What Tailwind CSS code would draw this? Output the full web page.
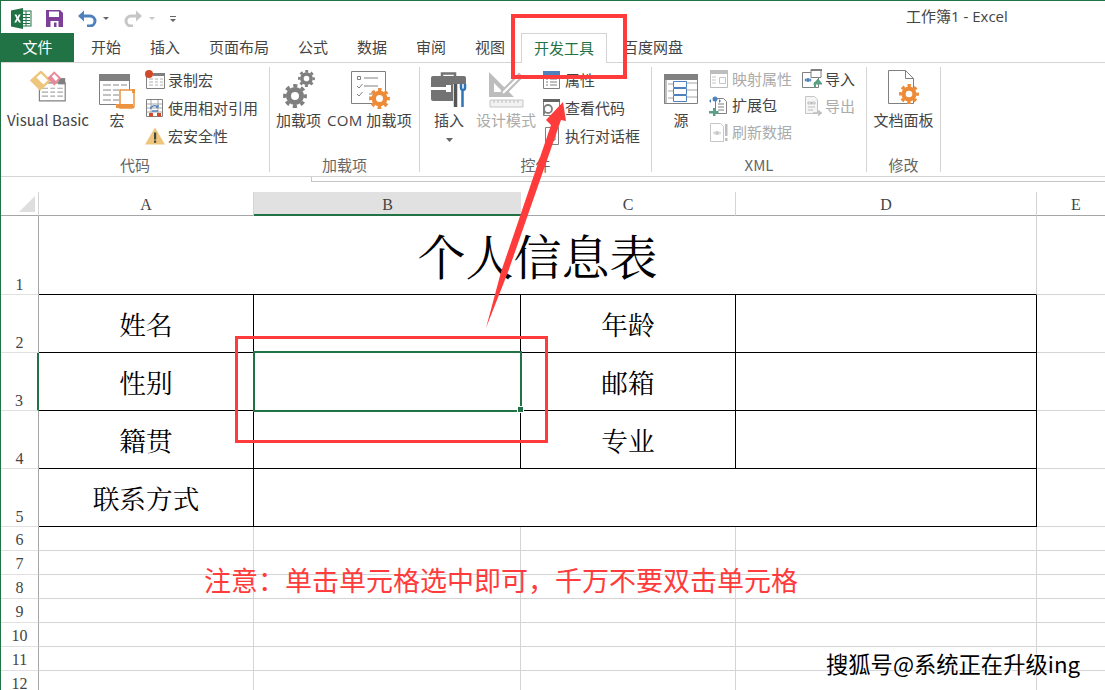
<!DOCTYPE html>
<html lang="zh-CN">
<head>
    <meta charset="UTF-8">
    <title>工作簿1 - Excel</title>
    <script src="https://cdn.jsdelivr.net/npm/@tailwindcss/browser@4"></script>
</head>
<body class="relative w-[1105px] h-[690px] overflow-hidden bg-white font-['Noto_Sans_CJK_SC',sans-serif] text-[15px] text-[#444]">

    <!-- 共用图形 -->
    <svg class="absolute w-0 h-0">
        <symbol id="gear" viewBox="0 0 24 24">
            <circle cx="12" cy="12" r="6.5" fill="none" stroke="currentColor" stroke-width="5"/>
            <circle cx="12" cy="12" r="10.2" fill="none" stroke="currentColor" stroke-width="3.4" stroke-dasharray="4.2 3.81" stroke-dashoffset="2.1"/>
        </symbol>
    </svg>

    <div class="h-[690px] border-l border-t border-[#217346] flex flex-col">
        <!-- 标题栏 -->
        <div class="relative h-[32px] shrink-0 flex items-center">
            <svg class="ml-[10px] mt-[2px]" width="21" height="21" viewBox="0 0 21 21">
                <rect x="9" y="3" width="11" height="15" fill="#fff" stroke="#217346"/>
                <path d="M11 6.500h8M11 9.500h8M11 12.500h8M11 15.500h8M15 3v15" stroke="#217346" stroke-width="1"/>
                <path d="M0 2.500 12 0v21L0 18.500z" fill="#217346"/>
                <path d="M3.500 6.500h2l1 2.500 1.200-2.500h2L7.700 10.500l2.300 4h-2L6.500 12l-1.300 2.500h-2L5.500 10.500z" fill="#fff"/>
            </svg>
            <svg class="ml-[14px] mt-[2px]" width="17" height="17" viewBox="0 0 17 17">
                <path d="M0 0h14l3 3v14H0z" fill="#7d3f98"/>
                <path d="M3 1.500h10v5.500H3z" fill="#fff"/>
                <path d="M4.500 11h8v6h-8z" fill="#fff"/>
                <path d="M8 12.500h2.500V17H8z" fill="#7d3f98"/>
            </svg>
            <svg class="ml-[15px] mt-[2px]" width="20" height="17" viewBox="0 0 20 17">
                <path d="M4 6h8a5 5 0 0 1 0 10H9" fill="none" stroke="#4f82bd" stroke-width="3"/>
                <path d="M0 6 6 .500V11.500z" fill="#4f82bd"/>
            </svg>
            <svg class="ml-[5px] mt-[3px]" width="6" height="3" viewBox="0 0 6 3"><path d="M0 0h6L3 3z" fill="#666"/></svg>
            <svg class="ml-[15px] mt-[2px]" width="18" height="17" viewBox="0 0 18 17">
                <path d="M14 6H7a5 5 0 0 0 0 10h2" fill="none" stroke="#c6c6c6" stroke-width="3"/>
                <path d="M18 6l-6-5.500V11.500z" fill="#c6c6c6"/>
            </svg>
            <svg class="ml-[7px] mt-[3px]" width="6" height="3" viewBox="0 0 6 3"><path d="M0 0h6L3 3z" fill="#c6c6c6"/></svg>
            <svg class="ml-[15px] mt-[3px]" width="6" height="6" viewBox="0 0 6 6"><path d="M0 0h6v1H0zM0 3h6L3 6z" fill="#666"/></svg>
            <span class="absolute left-[905px] top-[4px] leading-[22px] whitespace-nowrap">工作簿<span class="font-['Open_Sans',sans-serif]">1 - Excel</span></span>
        </div>

        <!-- 选项卡 -->
        <div class="h-[30px] shrink-0 flex border-b border-[#d4d4d4] leading-[28px]">
            <div class="w-[73px] bg-[#217346] text-white text-center">文件</div>
            <div class="ml-[2.500px] px-[14.500px]">开始</div>
            <div class="px-[14.500px]">插入</div>
            <div class="px-[14.500px]">页面布局</div>
            <div class="px-[14.500px]">公式</div>
            <div class="px-[14.500px]">数据</div>
            <div class="px-[14.500px]">审阅</div>
            <div class="px-[14.500px]">视图</div>
            <div class="mx-[1.500px] w-[86px] h-[30px] text-center border border-b-0 border-[#d4d4d4] bg-white text-[#217346]">开发工具</div>
            <div class="px-[14.500px]">百度网盘</div>
        </div>

        <!-- 功能区 -->
        <div class="h-[114px] shrink-0 flex border-b border-[#d4d4d4]">
            <!-- 代码 -->
            <section class="w-[268px] flex flex-col">
                <div class="h-[92px] flex">
                    <div class="ml-[6px] w-[82px] flex flex-col items-center">
                        <svg class="mt-[8px]" width="36" height="33" viewBox="0 0 46 42">
                            <path d="M12 15h33v23H12z" fill="#fff" stroke="#808080" stroke-width="1.500"/>
                            <path d="M36 9h9v8h-9z" fill="#808080"/>
                            <path d="M15 22h8M26 22h6M35 22h7M15 27h8M26 27h6M35 27h7M15 32h8M26 32h6M35 32h7" stroke="#a6a6a6" stroke-width="1.500"/>
                            <path d="M14 1 25 12 13 23 2 12z" fill="#fff" stroke="#edc67c" stroke-width="3"/>
                            <path d="M2 12l11 11 5-5-11-11z" fill="#edc67c"/>
                            <path d="M31 2 38 9 31 17 24 9z" fill="#fff" stroke="#e88a9a" stroke-width="2.500"/>
                            <path d="M24 9l7 8 3-3-7-8z" fill="#e88a9a"/>
                        </svg>
                        <span class="mt-[5px] leading-[22px] whitespace-nowrap">Visual Basic</span>
                    </div>
                    <div class="ml-[10px] w-[36px] flex flex-col items-center">
                        <svg class="mt-[11px]" width="36" height="38" viewBox="0 0 36 38">
                            <path d="M.500 .500h30v30H.500z" fill="#fff" stroke="#808080"/>
                            <path d="M0 0h31v7H0z" fill="#808080"/>
                            <path d="M4 11h8M14 11h6M22 11h6M4 16h8M14 16h6M4 21h8M14 21h6M4 26h8M14 26h6" stroke="#b0b0b0" stroke-width="1.500"/>
                            <path d="M21 16h14v16a2 2 0 0 1-2 2H21z" fill="#fff" stroke="#ed933f" stroke-width="1.500"/>
                            <path d="M17 30h17v4H17z" fill="#ed933f"/>
                            <path d="M33 15h3v4h-3z" fill="#ed933f"/>
                        </svg>
                        <span class="-mt-[3px] leading-[22px]">宏</span>
                    </div>
                    <div class="ml-[10px] pt-[3px] flex flex-col">
                        <div class="h-[28px] flex items-center gap-[3px]">
                            <svg width="20" height="20" viewBox="0 0 20 20">
                                <path d="M1.500 3.500h18v15h-18z" fill="#fff" stroke="#808080"/>
                                <path d="M8 3h12v3H8z" fill="#808080"/>
                                <path d="M4 9h4M10 9h3M15 9h3M4 12h4M10 12h3M15 12h3M4 15h4M10 15h3M15 15h3" stroke="#b0b0b0"/>
                                <circle cx="4" cy="4" r="4" fill="#d2492a"/>
                            </svg>
                            <span>录制宏</span>
                        </div>
                        <div class="h-[28px] flex items-center gap-[3px]">
                            <svg width="20" height="20" viewBox="0 0 20 20">
                                <path d="M1.500 1.500h16v17h-16z" fill="#fff" stroke="#808080"/>
                                <path d="M6 2v16M13 2v16M2 6h15M2 10h15M2 14h15" stroke="#a6a6a6"/>
                                <path d="M4 15h4v3.500H4zM12 15h4v3.500h-4z" fill="#d2492a"/>
                                <path d="M5.500 11a4 3.500 0 0 1 7.500-1.500M13 9.500l-2-.5M13 9.500v-2.500M7 13h6" fill="none" stroke="#4f82bd" stroke-width="1.300"/>
                            </svg>
                            <span>使用相对引用</span>
                        </div>
                        <div class="h-[28px] flex items-center gap-[3px]">
                            <svg width="20" height="18" viewBox="0 0 20 18">
                                <path d="M10 .500 20 17.500H0z" fill="#edc67c"/>
                                <path d="M9 5.500h2.200v7H9zM9 13.500h2.200v2.300H9z" fill="#444"/>
                            </svg>
                            <span>宏安全性</span>
                        </div>
                    </div>
                </div>
                <div class="leading-[20px] text-center text-[#666]">代码</div>
            </section>
            <div class="w-px my-[4px] h-[105px] bg-[#d4d4d4]"></div>

            <!-- 加载项 -->
            <section class="w-[149px] flex flex-col">
                <div class="h-[92px] flex">
                    <div class="ml-[6px] w-[45px] flex flex-col items-center">
                        <svg class="mt-[7px] ml-[1px] text-[#7f7f7f]" width="32" height="40" viewBox="0 0 32 40">
                            <use href="#gear" x="0" y="14" width="24" height="24"/>
                            <use href="#gear" x="15" y="0" width="17" height="17"/>
                        </svg>
                        <span class="-mt-[1px] leading-[22px] whitespace-nowrap">加载项</span>
                    </div>
                    <div class="ml-[5px] w-[87px] flex flex-col items-center">
                        <svg class="mt-[8px] ml-[2px]" width="40" height="40" viewBox="0 0 40 40">
                            <path d="M.500 .500h34v32h-34z" fill="#fff" stroke="#808080"/>
                            <path d="M6.500 5.500h3v3h-3zM13 7h14M13 15h14M18 23h4" fill="none" stroke="#808080"/>
                            <path d="M6 15l2 2 3.500-4M6 23l2 2 3.500-4" fill="none" stroke="#808080"/>
                            <use href="#gear" x="18" y="17" width="21" height="21" class="text-[#ed8b37]"/>
                        </svg>
                        <span class="-mt-[2px] leading-[22px] whitespace-nowrap tracking-[0.3px]"><span class="font-['Open_Sans',sans-serif]">COM</span> 加载项</span>
                    </div>
                </div>
                <div class="leading-[20px] text-center text-[#666]">加载项</div>
            </section>
            <div class="w-px my-[4px] h-[105px] bg-[#d4d4d4]"></div>

            <!-- 控件 -->
            <section class="w-[231px] flex flex-col">
                <div class="h-[92px] flex">
                    <div class="ml-[11px] w-[36px] flex flex-col items-center">
                        <svg class="mt-[9px]" width="36" height="36" viewBox="0 0 36 36">
                            <path d="M11 5V1.500h13V5" fill="none" stroke="#737373" stroke-width="2.500"/>
                            <path d="M2 4h31a2 2 0 0 1 2 2v23H2a2 2 0 0 1-2-2V6a2 2 0 0 1 2-2z" fill="#737373"/>
                            <path d="M0 15h19v3H0z" fill="#fff"/>
                            <path d="M15 13h5v7h-5z" fill="#fff"/>
                            <path d="M22 12h13v24H22z" fill="#fff"/>
                            <path d="M24.500 12v23" stroke="#555" stroke-width="3.500"/>
                            <path d="M30 12v4a2 2 0 0 0 1.500 2v17M34 12v4a2 2 0 0 1-2.500 2" fill="none" stroke="#2f75b5" stroke-width="2.500"/>
                        </svg>
                        <span class="mt-[1px] leading-[22px]">插入</span>
                        <svg class="mt-[7px]" width="7" height="4" viewBox="0 0 7 4"><path d="M0 0h7L3.500 4z" fill="#666"/></svg>
                    </div>
                    <div class="ml-[9px] w-[60px] flex flex-col items-center">
                        <svg class="mt-[8px]" width="36" height="37" viewBox="0 0 36 37">
                            <path d="M1 1v25h25zM6 12v9h9z" fill="#bdbdbd" fill-rule="evenodd"/>
                            <path d="M14 20 31 3l3 3-17 17-4 1z" fill="#fff" stroke="#bdbdbd" stroke-width="2"/>
                            <path d="M2 29h33v7H2z" fill="#f2f2f2" stroke="#c6c6c6"/>
                            <path d="M6 29v3M10 29v3M14 29v3M18 29v3M22 29v3M26 29v3M30 29v3" stroke="#bdbdbd"/>
                        </svg>
                        <span class="mt-[1px] leading-[22px] whitespace-nowrap text-[#ababab]">设计模式</span>
                    </div>
                    <div class="ml-[7px] pt-[3px] flex flex-col">
                        <div class="h-[28px] flex items-center gap-[5px]">
                            <svg width="17" height="18" viewBox="0 0 17 18">
                                <path d="M.500 .500h16v17H.500z" fill="#fff" stroke="#808080"/>
                                <path d="M0 0h17v4H0z" fill="#4f82bd"/>
                                <path d="M3 8h2M7 8h7M3 11h2M7 11h7M3 14h2M7 14h7" stroke="#808080"/>
                            </svg>
                            <span>属性</span>
                        </div>
                        <div class="h-[28px] flex items-center gap-[5px]">
                            <svg width="17" height="18" viewBox="0 0 17 18">
                                <path d="M.500 2.500h16v14H.500z" fill="#fff" stroke="#808080"/>
                                <path d="M0 0h18v3H0z" fill="#666"/>
                                <circle cx="5" cy="10" r="4" fill="#fff" stroke="#808080" stroke-width="1.800"/>
                                <path d="M2 13l-2 3" stroke="#808080" stroke-width="2"/>
                            </svg>
                            <span>查看代码</span>
                        </div>
                        <div class="h-[28px] flex items-center gap-[5px]">
                            <svg width="17" height="18" viewBox="0 0 17 18">
                                <path d="M2.500 .500h13v17h-13z" fill="#fff" stroke="#808080"/>
                                <path d="M6 6h6v7H6z" fill="#fff" stroke="#666"/>
                            </svg>
                            <span>执行对话框</span>
                        </div>
                    </div>
                </div>
                <div class="leading-[20px] text-center text-[#666]">控件</div>
            </section>
            <div class="w-px my-[4px] h-[105px] bg-[#d4d4d4]"></div>

            <!-- XML -->
            <section class="w-[214px] flex flex-col">
                <div class="h-[92px] flex">
                    <div class="ml-[12px] w-[34px] flex flex-col items-center">
                        <svg class="mt-[11px]" width="34" height="30" viewBox="0 0 34 30">
                            <path d="M.500 .500h33v29H.500z" fill="#fff" stroke="#808080"/>
                            <path d="M0 0h34v6H0z" fill="#808080"/>
                            <path d="M0 0h3v30H0z" fill="#808080" opacity=".5"/>
                            <path d="M4 10h5M4 17h5M4 24h5M23 9h10M23 16h10M23 23h10" stroke="#a6a6a6"/>
                            <path d="M9.500 7.500h13v6h-13zM9.500 14.500h13v6h-13zM9.500 21.500h13v6h-13z" fill="#fff" stroke="#4f82bd"/>
                        </svg>
                        <span class="mt-[5px] leading-[22px]">源</span>
                    </div>
                    <div class="ml-[12px] w-[92px] pt-[3px] flex flex-col">
                        <div class="h-[26px] flex items-center gap-[4px] text-[#ababab]">
                            <svg width="18" height="18" viewBox="0 0 18 18">
                                <path d="M.500 .500h17v17H.500z" fill="#fff" stroke="#bdbdbd"/>
                                <path d="M0 0h18v4H0z" fill="#bdbdbd"/>
                                <path d="M2 7h4M2 10h4M2 13h4M9.500 7.500h6v6h-6z" fill="none" stroke="#c6c6c6"/>
                            </svg>
                            <span class="whitespace-nowrap">映射属性</span>
                        </div>
                        <div class="h-[27px] flex items-center gap-[4px]">
                            <svg class="-ml-[2px]" width="20" height="20" viewBox="0 0 20 20">
                                <path d="M7.500 2.500h8l3 3v12h-11z" fill="#fff" stroke="#808080"/>
                                <path d="M10 8h6M10 11h6M10 14h6" stroke="#808080"/>
                                <circle cx="7" cy="3" r="2.500" fill="#4f82bd"/>
                                <path d="M1 5l2-2v4zM13 5l-2-2v4z" fill="#4f82bd"/>
                                <path d="M5 12h2.500v3H10.500v2.500H7.500V20H5v-2.500H1V15h4z" fill="#5aa084"/>
                            </svg>
                            <span class="whitespace-nowrap">扩展包</span>
                        </div>
                        <div class="h-[27px] flex items-center gap-[3px] text-[#ababab]">
                            <svg width="19" height="19" viewBox="0 0 19 19">
                                <path d="M.500 .500h10l3 3v15H.500z" fill="#fff" stroke="#c6c6c6"/>
                                <circle cx="7" cy="10" r="2" fill="#c6c6c6"/>
                                <path d="M3 10l1.500-2v4zM11 10l-1.500-2v4z" fill="#c6c6c6"/>
                                <path d="M15 1h2.500v12H15zM15 15h2.500v3H15z" fill="#bdbdbd"/>
                            </svg>
                            <span class="whitespace-nowrap">刷新数据</span>
                        </div>
                    </div>
                    <div class="pt-[3px] flex flex-col">
                        <div class="h-[26px] flex items-center gap-[3px]">
                            <svg width="20" height="20" viewBox="0 0 20 20">
                                <path d="M.500 3.500h13l3 3v12H.500z" fill="#fff" stroke="#808080"/>
                                <path d="M9 .500h10v8H9z" fill="#fff" stroke="#808080"/>
                                <path d="M9 0h11v2H9z" fill="#808080"/>
                                <circle cx="6" cy="11" r="2" fill="#4f82bd"/>
                                <path d="M2.500 11 4 9v4zM9.500 11 8 9v4z" fill="#4f82bd"/>
                                <path d="M13 19v-5h3M16 11l-3 3.500h6z" fill="none" stroke="#5aa084" stroke-width="2"/>
                            </svg>
                            <span>导入</span>
                        </div>
                        <div class="h-[28px] flex items-center gap-[3px] text-[#ababab]">
                            <svg class="ml-[3px]" width="17" height="20" viewBox="0 0 17 20">
                                <path d="M.500 .500h9l3 3v14H.500z" fill="#f5f5f5" stroke="#c6c6c6"/>
                                <circle cx="6.500" cy="7" r="1.500" fill="#bdbdbd"/>
                                <path d="M2.500 7 4 5.500v3zM10.500 7 9 5.500v3zM3 11h7M3 14h5" fill="none" stroke="#bdbdbd"/>
                                <path d="M8 17h7M13 14.500l3 2.500-3 2.500" fill="none" stroke="#bdbdbd" stroke-width="1.500"/>
                            </svg>
                            <span>导出</span>
                        </div>
                    </div>
                </div>
                <div class="leading-[20px] text-center text-[#666]">XML</div>
            </section>
            <div class="w-px my-[4px] h-[105px] bg-[#d4d4d4]"></div>

            <!-- 修改 -->
            <section class="w-[73px] flex flex-col">
                <div class="h-[92px] flex flex-col items-center">
                    <svg class="mt-[7px]" width="31" height="38" viewBox="0 0 31 38">
                        <path d="M.500 .500h17l8 8v25H.500zM17.500 .500v8h8" fill="#fff" stroke="#808080"/>
                        <use href="#gear" x="11" y="14" width="20" height="20" class="text-[#ed8b37]"/>
                    </svg>
                    <span class="mt-[1px] leading-[22px] whitespace-nowrap">文档面板</span>
                </div>
                <div class="leading-[20px] text-center text-[#666]">修改</div>
            </section>
            <div class="w-px my-[4px] h-[105px] bg-[#d4d4d4]"></div>
        </div>

        <!-- 编辑栏残留线 -->
        <div class="h-[15px] shrink-0 flex">
            <div class="w-[310px]"></div>
            <div class="flex-1 h-[5px] border-l border-b border-[#c6c6c6]"></div>
        </div>

        <!-- 工作表 -->
        <div class="flex-1 overflow-hidden grid grid-cols-[38px_215px_267px_215px_301px_68px] grid-rows-[24px_79px_58px_58px_58px_58px_repeat(7,24px)] font-['Liberation_Serif',serif] text-[16px] text-[#444]">
            <!-- 列标 -->
            <div class="relative border-r border-b border-r-[#d4d4d4] border-b-[#a6a6a6]">
                <div class="absolute right-[3px] bottom-[3px] w-0 h-0 border-l-[16px] border-b-[16px] border-l-transparent border-b-[#dedede]"></div>
            </div>
            <div class="pt-[3px] flex items-center justify-center border-r border-b border-r-[#d4d4d4] border-b-[#a6a6a6]">A</div>
            <div class="pt-[3px] flex items-center justify-center bg-[#e1e1e1] border-b-2 border-[#217346]">B</div>
            <div class="pt-[3px] flex items-center justify-center border-r border-b border-r-[#d4d4d4] border-b-[#a6a6a6]">C</div>
            <div class="pt-[3px] flex items-center justify-center border-r border-b border-r-[#d4d4d4] border-b-[#a6a6a6]">D</div>
            <div class="pt-[3px] pl-[10px] flex items-center justify-center border-b border-b-[#a6a6a6]">E</div>

            <!-- 第 1 行 -->
            <div class="flex items-end justify-center border-r border-b border-r-[#a6a6a6] border-b-[#e0e0e0] leading-[18px]">1</div>
            <div class="col-span-4 flex items-center justify-center border-r border-b border-r-[#d4d4d4] border-b-black font-['Noto_Serif_CJK_SC','Noto_Sans_CJK_SC',serif] text-[48px] text-black">个人信息表</div>
            <div class="border-b border-[#d4d4d4]"></div>

            <!-- 第 2 行 -->
            <div class="flex items-end justify-center border-r border-b border-r-[#a6a6a6] border-b-[#e0e0e0] leading-[18px]">2</div>
            <div class="pt-[1px] flex items-center justify-center border-r border-b border-black font-['Noto_Serif_CJK_SC','Noto_Sans_CJK_SC',serif] text-[26.670px] text-black">姓名</div>
            <div class="border-r border-b border-black"></div>
            <div class="pt-[1px] flex items-center justify-center border-r border-b border-black font-['Noto_Serif_CJK_SC','Noto_Sans_CJK_SC',serif] text-[26.670px] text-black">年龄</div>
            <div class="border-r border-b border-black"></div>
            <div class="border-b border-[#d4d4d4]"></div>

            <!-- 第 3 行 -->
            <div class="flex items-end justify-center border-r-2 border-b border-r-[#217346] border-b-[#e0e0e0] leading-[18px]">3</div>
            <div class="pt-[1px] flex items-center justify-center border-r border-b border-black font-['Noto_Serif_CJK_SC','Noto_Sans_CJK_SC',serif] text-[26.670px] text-black">性别</div>
            <div class="relative border-r border-b border-black">
                <!-- 选中单元格 -->
                <div class="absolute -left-[1px] -top-[2px] w-[269px] h-[61px] border-2 border-[#217346]"></div>
                <div class="absolute left-[263px] bottom-[-3px] w-[7px] h-[7px] bg-[#217346] border border-white"></div>
            </div>
            <div class="pt-[1px] flex items-center justify-center border-r border-b border-black font-['Noto_Serif_CJK_SC','Noto_Sans_CJK_SC',serif] text-[26.670px] text-black">邮箱</div>
            <div class="border-r border-b border-black"></div>
            <div class="border-b border-[#d4d4d4]"></div>

            <!-- 第 4 行 -->
            <div class="flex items-end justify-center border-r border-b border-r-[#a6a6a6] border-b-[#e0e0e0] leading-[18px]">4</div>
            <div class="pt-[1px] flex items-center justify-center border-r border-b border-black font-['Noto_Serif_CJK_SC','Noto_Sans_CJK_SC',serif] text-[26.670px] text-black">籍贯</div>
            <div class="border-r border-b border-black"></div>
            <div class="pt-[1px] flex items-center justify-center border-r border-b border-black font-['Noto_Serif_CJK_SC','Noto_Sans_CJK_SC',serif] text-[26.670px] text-black">专业</div>
            <div class="border-r border-b border-black"></div>
            <div class="border-b border-[#d4d4d4]"></div>

            <!-- 第 5 行 -->
            <div class="flex items-end justify-center border-r border-b border-r-[#a6a6a6] border-b-[#e0e0e0] leading-[18px]">5</div>
            <div class="pt-[1px] flex items-center justify-center border-r border-b border-black font-['Noto_Serif_CJK_SC','Noto_Sans_CJK_SC',serif] text-[26.670px] text-black">联系方式</div>
            <div class="col-span-3 border-r border-b border-black"></div>
            <div class="border-b border-[#d4d4d4]"></div>

            <!-- 空行 -->
            <div class="pt-[3px] flex items-center justify-center border-r border-b border-r-[#a6a6a6] border-b-[#e0e0e0]">6</div>
            <div class="border-r border-b border-[#d4d4d4]"></div><div class="border-r border-b border-[#d4d4d4]"></div><div class="border-r border-b border-[#d4d4d4]"></div><div class="border-r border-b border-[#d4d4d4]"></div><div class="border-b border-[#d4d4d4]"></div>
            <div class="pt-[3px] flex items-center justify-center border-r border-b border-r-[#a6a6a6] border-b-[#e0e0e0]">7</div>
            <div class="border-r border-b border-[#d4d4d4]"></div><div class="border-r border-b border-[#d4d4d4]"></div><div class="border-r border-b border-[#d4d4d4]"></div><div class="border-r border-b border-[#d4d4d4]"></div><div class="border-b border-[#d4d4d4]"></div>
            <div class="pt-[3px] flex items-center justify-center border-r border-b border-r-[#a6a6a6] border-b-[#e0e0e0]">8</div>
            <div class="border-r border-b border-[#d4d4d4]"></div><div class="border-r border-b border-[#d4d4d4]"></div><div class="border-r border-b border-[#d4d4d4]"></div><div class="border-r border-b border-[#d4d4d4]"></div><div class="border-b border-[#d4d4d4]"></div>
            <div class="pt-[3px] flex items-center justify-center border-r border-b border-r-[#a6a6a6] border-b-[#e0e0e0]">9</div>
            <div class="border-r border-b border-[#d4d4d4]"></div><div class="border-r border-b border-[#d4d4d4]"></div><div class="border-r border-b border-[#d4d4d4]"></div><div class="border-r border-b border-[#d4d4d4]"></div><div class="border-b border-[#d4d4d4]"></div>
            <div class="pt-[3px] flex items-center justify-center border-r border-b border-r-[#a6a6a6] border-b-[#e0e0e0]">10</div>
            <div class="border-r border-b border-[#d4d4d4]"></div><div class="border-r border-b border-[#d4d4d4]"></div><div class="border-r border-b border-[#d4d4d4]"></div><div class="border-r border-b border-[#d4d4d4]"></div><div class="border-b border-[#d4d4d4]"></div>
            <div class="pt-[3px] flex items-center justify-center border-r border-b border-r-[#a6a6a6] border-b-[#e0e0e0]">11</div>
            <div class="border-r border-b border-[#d4d4d4]"></div><div class="border-r border-b border-[#d4d4d4]"></div><div class="border-r border-b border-[#d4d4d4]"></div><div class="border-r border-b border-[#d4d4d4]"></div><div class="border-b border-[#d4d4d4]"></div>
            <div class="pt-[3px] flex items-center justify-center border-r border-b border-r-[#a6a6a6] border-b-[#e0e0e0]">12</div>
            <div class="border-r border-b border-[#d4d4d4]"></div><div class="border-r border-b border-[#d4d4d4]"></div><div class="border-r border-b border-[#d4d4d4]"></div><div class="border-r border-b border-[#d4d4d4]"></div><div class="border-b border-[#d4d4d4]"></div>
        </div>
    </div>

    <!-- 截图上的标注 -->
    <div class="absolute left-[511px] top-[14px] w-[116px] h-[65px] border-4 border-[#ff3b3b]"></div>
    <div class="absolute left-[235px] top-[336px] w-[313px] h-[107px] border-[3px] border-[#ff3b3b]"></div>
    <svg class="absolute left-0 top-0" width="1105" height="690" viewBox="0 0 1105 690">
        <path d="M486 328 501 272 551 125 546 120 563 102 566 121 561 120 508 272z" fill="#ff3b3b"/>
    </svg>
    <div class="absolute left-[204px] top-[562px] text-[27px] leading-[36px] whitespace-nowrap text-[#ff3b3b]">注意：单击单元格选中即可，千万不要双击单元格</div>
    <div class="absolute left-[826px] top-[648px] text-[22.300px] leading-[30px] whitespace-nowrap text-black [text-shadow:0_0_2px_#fff,1px_1px_1px_#fff]">搜狐号@系统正在升级ing</div>
</body>
</html>
